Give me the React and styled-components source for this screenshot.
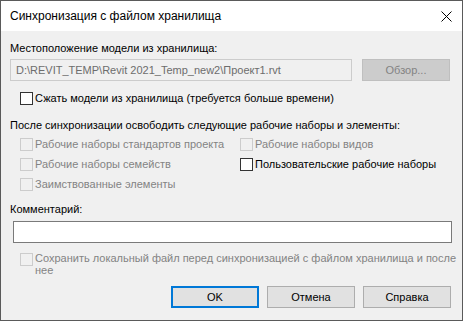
import React from "react";
import styled, { createGlobalStyle } from "styled-components";

const Global = createGlobalStyle`
  html, body { margin: 0; padding: 0; background: #ffffff; }
  body { font-family: "Liberation Sans", Arial, sans-serif; font-size: 11px; color: #000; }
  * { box-sizing: border-box; }
`;

const Window = styled.div`
  width: 463px;
  height: 321px;
  border: 1px solid #5a5a5a;
  background: #f0f0f0;
  display: flex;
  flex-direction: column;
`;

const TitleBar = styled.div`
  height: 30px;
  background: #ffffff;
  display: flex;
  align-items: center;
  justify-content: space-between;
  padding: 0 6px 0 9px;
  font-size: 12px;
`;

const CloseBtn = styled.div`
  width: 20px;
  height: 20px;
  display: flex;
  align-items: center;
  justify-content: center;
`;

const Body = styled.div`
  flex: 1;
  display: flex;
  flex-direction: column;
  padding: 0 10px 0 9px;
`;

const Label = styled.div`
  height: 14px;
  line-height: 14px;
  margin-top: ${(p) => p.mt || 0}px;
  white-space: nowrap;
`;

const PathRow = styled.div`
  display: flex;
  align-items: center;
  gap: 10px;
  margin-top: 4px;
`;

const PathField = styled.div`
  width: 342px;
  height: 22px;
  border: 1px solid #cccccc;
  background: #f0f0f0;
  color: #6d6d6d;
  padding-left: 5px;
  line-height: 20px;
  white-space: nowrap;
`;

const Button = styled.div`
  width: 88px;
  height: 22px;
  border: ${(p) => (p.primary ? "2px solid #0078d7" : "1px solid #adadad")};
  background: ${(p) => (p.disabled ? "#cccccc" : "#e1e1e1")};
  border-color: ${(p) => (p.disabled ? "#bfbfbf" : undefined)};
  color: ${(p) => (p.disabled ? "#838383" : "#000")};
  display: flex;
  align-items: center;
  justify-content: center;
`;

const Check = styled.label`
  display: flex;
  align-items: ${(p) => (p.top ? "flex-start" : "center")};
  height: ${(p) => p.h || 14}px;
  margin-top: ${(p) => p.mt || 0}px;
  padding-left: ${(p) => (p.indent ? 10 : 0)}px;
  color: ${(p) => (p.disabled ? "#838383" : "#000")};
  white-space: nowrap;
`;

const Box = styled.span`
  width: 13px;
  height: 13px;
  flex: none;
  border: 1px solid ${(p) => (p.disabled ? "#cccccc" : "#333333")};
  background: ${(p) => (p.disabled ? "#f0f0f0" : "#ffffff")};
  margin-right: 2px;
  margin-top: ${(p) => (p.top ? 1 : 0)}px;
`;

const Grid = styled.div`
  display: grid;
  grid-template-columns: 220px 1fr;
  grid-auto-rows: 20px;
  padding-left: 10px;
  margin-top: 2px;
`;

const CommentField = styled.div`
  height: 22px;
  margin: 5px 0 0 3px;
  border: 1px solid #7a7a7a;
  background: #ffffff;
`;

const MultiText = styled.span`
  line-height: 12px;
  white-space: nowrap;
`;

const ButtonRow = styled.div`
  display: flex;
  justify-content: flex-end;
  gap: 8px;
  margin-top: 8px;
  padding-right: 1px;
`;

const CheckItem = ({ children, disabled }) => (
  <Check disabled={disabled} h={20}>
    <Box disabled={disabled} />
    {children}
  </Check>
);

export default function App() {
  return (
    <>
      <Global />
      <Window>
        <TitleBar>
          <span>Синхронизация с файлом хранилища</span>
          <CloseBtn>
            <svg width="11" height="11" viewBox="0 0 11 11">
              <path d="M0.5 0.5 L10.5 10.5 M10.5 0.5 L0.5 10.5" stroke="#000" strokeWidth="1" />
            </svg>
          </CloseBtn>
        </TitleBar>
        <Body>
          <Label mt={10}>Местоположение модели из хранилища:</Label>
          <PathRow>
            <PathField>D:\REVIT_TEMP\Revit 2021_Temp_new2\Проект1.rvt</PathField>
            <Button disabled>Обзор...</Button>
          </PathRow>
          <Check indent mt={10}>
            <Box />
            Сжать модели из хранилища (требуется больше времени)
          </Check>
          <Label mt={13}>После синхронизации освободить следующие рабочие наборы и элементы:</Label>
          <Grid>
            <CheckItem disabled>Рабочие наборы стандартов проекта</CheckItem>
            <CheckItem disabled>Рабочие наборы видов</CheckItem>
            <CheckItem disabled>Рабочие наборы семейств</CheckItem>
            <CheckItem>Пользовательские рабочие наборы</CheckItem>
            <CheckItem disabled>Заимствованные элементы</CheckItem>
          </Grid>
          <Label mt={8}>Комментарий:</Label>
          <CommentField />
          <Check indent disabled top h={26} mt={9}>
            <Box disabled top />
            <MultiText>
              Сохранить локальный файл перед синхронизацией с файлом хранилища и после
              <br />
              нее
            </MultiText>
          </Check>
          <ButtonRow>
            <Button primary>OK</Button>
            <Button>Отмена</Button>
            <Button>Справка</Button>
          </ButtonRow>
        </Body>
      </Window>
    </>
  );
}
